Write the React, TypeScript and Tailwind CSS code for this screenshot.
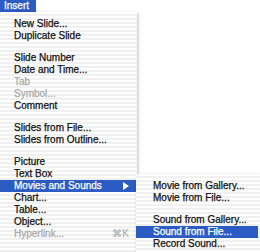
import React from "react";

type Item = { label?: string; disabled?: boolean; active?: boolean; sub?: boolean; key?: string; sep?: boolean };

const mainItems: Item[] = [
  { label: "New Slide..." },
  { label: "Duplicate Slide" },
  { sep: true },
  { label: "Slide Number" },
  { label: "Date and Time..." },
  { label: "Tab", disabled: true },
  { label: "Symbol...", disabled: true },
  { label: "Comment" },
  { sep: true },
  { label: "Slides from File..." },
  { label: "Slides from Outline..." },
  { sep: true },
  { label: "Picture" },
  { label: "Text Box" },
  { label: "Movies and Sounds", active: true, sub: true },
  { label: "Chart..." },
  { label: "Table..." },
  { label: "Object..." },
  { label: "Hyperlink...", disabled: true, key: "⌘K" },
];

const subItems: Item[] = [
  { label: "Movie from Gallery..." },
  { label: "Movie from File..." },
  { sep: true },
  { label: "Sound from Gallery..." },
  { label: "Sound from File...", active: true },
  { label: "Record Sound..." },
];

const stripes =
  "bg-[repeating-linear-gradient(180deg,#ffffff_0px,#ffffff_2px,#f0f0f0_2px,#f0f0f0_4px)]";

function Row({ item, pad }: { item: Item; pad: string }) {
  if (item.sep) return <div className="h-[10px]" />;
  const color = item.active ? "text-white" : item.disabled ? "text-[#a8a8a8]" : "text-[#111]";
  return (
    <div
      className={
        "flex h-[12px] items-center pr-[8px] [-webkit-text-stroke:0.25px_currentColor] " +
        pad +
        " " +
        color +
        (item.active ? " bg-[#2c5cc3]" : "")
      }
    >
      <span className="flex-1 whitespace-nowrap">{item.label}</span>
      {item.key && <span className="text-[#b0b0b0]">{item.key}</span>}
      {item.sub && (
        <svg width="6" height="8" viewBox="0 0 6 8">
          <path d="M0 0 L6 4 L0 8 Z" fill="#ffffff" />
        </svg>
      )}
    </div>
  );
}

export default function App() {
  return (
    <div
      className="h-[252px] w-[260px] overflow-hidden bg-white text-[10px] leading-none"
      style={{ fontFamily: '"Liberation Sans", Arial, sans-serif' }}
    >
      <div className="flex h-[12px] w-[36px] items-center bg-[#2c5cc3] pl-[4px] text-white [-webkit-text-stroke:0.25px_currentColor]">
        Insert
      </div>

      <div className="flex">
        <div className={"w-[137px] pt-[6px] pb-[6px] shadow-[1px_1px_3px_rgba(0,0,0,0.25)] " + stripes}>
          {mainItems.map((it, i) => (
            <Row key={i} item={it} pad="pl-[14px]" />
          ))}
        </div>

        <div className="mt-[162px] flex-1">
          <div className={"-ml-[1px] h-[90px] pt-[6px] pr-[2px] shadow-[1px_1px_3px_rgba(0,0,0,0.25)] " + stripes}>
            {subItems.map((it, i) => (
              <Row key={i} item={it} pad="pl-[17px]" />
            ))}
          </div>
        </div>
      </div>
    </div>
  );
}
